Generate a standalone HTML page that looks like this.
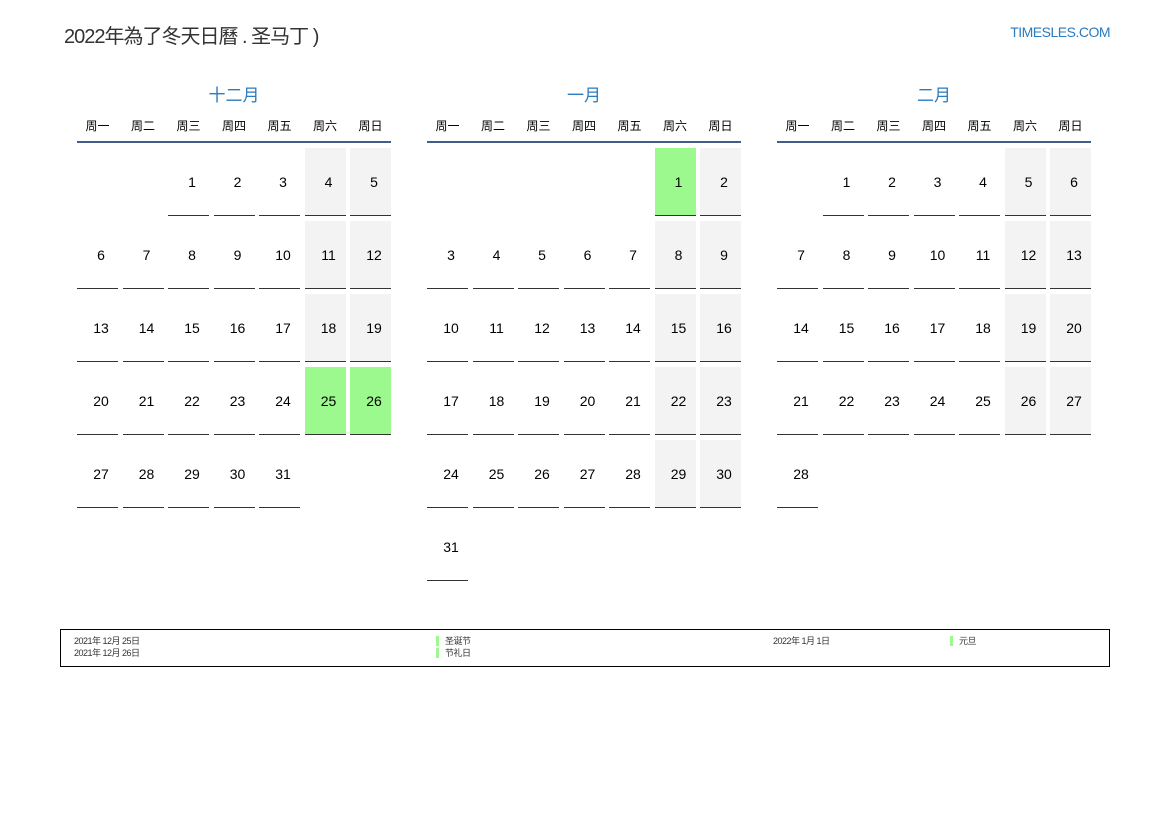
<!DOCTYPE html>
<html><head><meta charset="utf-8"><style>
*{margin:0;padding:0;box-sizing:border-box}
body{width:1169px;height:827px;background:#fff;position:relative;font-family:"Liberation Sans","Noto Sans CJK SC",sans-serif;overflow:hidden}
.title{position:absolute;left:64px;top:20px;font-size:20px;color:#333;letter-spacing:-1px}
.site{position:absolute;right:59px;top:24px;font-size:14px;color:#2a7bbf;letter-spacing:-0.5px}
.m{position:absolute;top:84px;width:314px}
.mt{text-align:center;font-size:17px;color:#2a7bbf;height:24px;line-height:24px}
.wd{display:grid;grid-template-columns:repeat(7,41px);column-gap:4.5px;margin-top:9px;height:26px;border-bottom:2px solid #3f5f8a;font-size:12px;color:#000}
.wd div{text-align:center;line-height:18px}
.g{display:grid;grid-template-columns:repeat(7,41px);grid-auto-rows:68px;column-gap:4.5px;row-gap:5px;margin-top:5px}
.g div{text-align:center;line-height:68px;font-size:14px;color:#000;border-bottom:1px solid #333;padding-left:7px}
.g div.e{border:none}
.g div.w{background:#f3f3f3}
.g div.h{background:#9cf98d}
.leg{position:absolute;left:60px;top:629px;width:1050px;height:38px;border:1px solid #000;font-size:9px;color:#333;line-height:12px;letter-spacing:-0.5px}
.leg span{position:absolute}
.bar{position:absolute;width:3px;height:10px;background:#9cf98d}
</style></head><body>
<div class="title">2022年為了冬天日曆 . 圣马丁 )</div>
<div class="site">TIMESLES.COM</div>

<div class="m" style="left:77px">
<div class="mt">十二月</div>
<div class="wd"><div>周一</div><div>周二</div><div>周三</div><div>周四</div><div>周五</div><div>周六</div><div>周日</div></div>
<div class="g">
<div class="e"></div><div class="e"></div><div>1</div><div>2</div><div>3</div><div class="w">4</div><div class="w">5</div>
<div>6</div><div>7</div><div>8</div><div>9</div><div>10</div><div class="w">11</div><div class="w">12</div>
<div>13</div><div>14</div><div>15</div><div>16</div><div>17</div><div class="w">18</div><div class="w">19</div>
<div>20</div><div>21</div><div>22</div><div>23</div><div>24</div><div class="h">25</div><div class="h">26</div>
<div>27</div><div>28</div><div>29</div><div>30</div><div>31</div><div class="e"></div><div class="e"></div>
</div></div>

<div class="m" style="left:427px">
<div class="mt">一月</div>
<div class="wd"><div>周一</div><div>周二</div><div>周三</div><div>周四</div><div>周五</div><div>周六</div><div>周日</div></div>
<div class="g">
<div class="e"></div><div class="e"></div><div class="e"></div><div class="e"></div><div class="e"></div><div class="h">1</div><div class="w">2</div>
<div>3</div><div>4</div><div>5</div><div>6</div><div>7</div><div class="w">8</div><div class="w">9</div>
<div>10</div><div>11</div><div>12</div><div>13</div><div>14</div><div class="w">15</div><div class="w">16</div>
<div>17</div><div>18</div><div>19</div><div>20</div><div>21</div><div class="w">22</div><div class="w">23</div>
<div>24</div><div>25</div><div>26</div><div>27</div><div>28</div><div class="w">29</div><div class="w">30</div>
<div>31</div>
</div></div>

<div class="m" style="left:777px">
<div class="mt">二月</div>
<div class="wd"><div>周一</div><div>周二</div><div>周三</div><div>周四</div><div>周五</div><div>周六</div><div>周日</div></div>
<div class="g">
<div class="e"></div><div>1</div><div>2</div><div>3</div><div>4</div><div class="w">5</div><div class="w">6</div>
<div>7</div><div>8</div><div>9</div><div>10</div><div>11</div><div class="w">12</div><div class="w">13</div>
<div>14</div><div>15</div><div>16</div><div>17</div><div>18</div><div class="w">19</div><div class="w">20</div>
<div>21</div><div>22</div><div>23</div><div>24</div><div>25</div><div class="w">26</div><div class="w">27</div>
<div>28</div>
</div></div>

<div class="leg">
<span style="left:13px;top:5px">2021年 12月 25日</span>
<span style="left:13px;top:17px">2021年 12月 26日</span>
<div class="bar" style="left:375px;top:6px"></div><span style="left:384px;top:5px">圣诞节</span>
<div class="bar" style="left:375px;top:18px"></div><span style="left:384px;top:17px">节礼日</span>
<span style="left:712px;top:5px">2022年 1月 1日</span>
<div class="bar" style="left:889px;top:6px"></div><span style="left:898px;top:5px">元旦</span>
</div>
</body></html>
